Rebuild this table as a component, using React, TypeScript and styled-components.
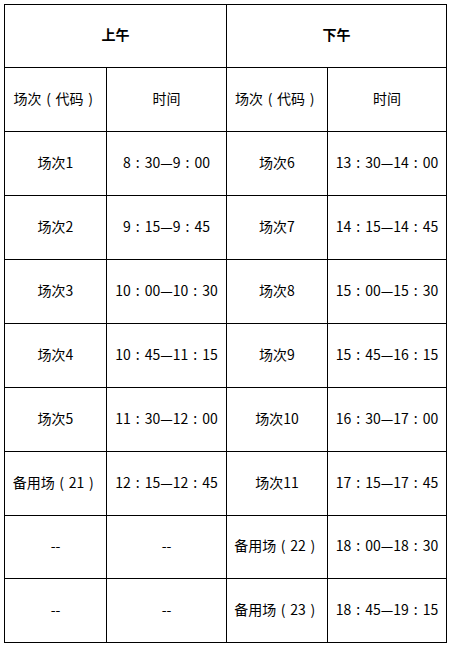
import React from "react";
import styled, { createGlobalStyle } from "styled-components";

const Global = createGlobalStyle`
  html, body { margin: 0; padding: 0; background: #fff; }
  body { font-family: "Noto Sans CJK SC", "Microsoft YaHei", sans-serif; color: #000; }
`;

const Page = styled.div`
  padding: 4px;
`;

const Grid = styled.div`
  display: grid;
  grid-template-columns: 102px 120px 101px 119px;
  grid-template-rows: 63px 64px 64px 64px 64px 64px 64px 64px 63px 64px;
  width: max-content;
  border-top: 1px solid #000;
  border-left: 1px solid #000;
`;

const Cell = styled.div<{ $span?: number; $bold?: boolean }>`
  grid-column: span ${(p) => p.$span ?? 1};
  border-right: 1px solid #000;
  border-bottom: 1px solid #000;
  display: flex;
  align-items: center;
  justify-content: center;
  font-size: 14px;
  font-weight: ${(p) => (p.$bold ? 700 : 400)};
  white-space: nowrap;
  line-height: 1;
  padding-bottom: 4px;
  box-sizing: border-box;
`;

const Punct = styled.span`
  display: inline-block;
  width: 1em;
  text-align: center;
`;

const MAP: Record<string, string> = { "：": ":", "（": "(", "）": ")" };

function Text({ s }: { s: string }) {
  const parts = s.split(/([：（）])/).filter(Boolean);
  return (
    <span>
      {parts.map((p, i) =>
        MAP[p] ? <Punct key={i}>{MAP[p]}</Punct> : <React.Fragment key={i}>{p}</React.Fragment>
      )}
    </span>
  );
}

const rows: [string, string, string, string][] = [
  ["场次（代码）", "时间", "场次（代码）", "时间"],
  ["场次1", "8：30—9：00", "场次6", "13：30—14：00"],
  ["场次2", "9：15—9：45", "场次7", "14：15—14：45"],
  ["场次3", "10：00—10：30", "场次8", "15：00—15：30"],
  ["场次4", "10：45—11：15", "场次9", "15：45—16：15"],
  ["场次5", "11：30—12：00", "场次10", "16：30—17：00"],
  ["备用场（21）", "12：15—12：45", "场次11", "17：15—17：45"],
  ["--", "--", "备用场（22）", "18：00—18：30"],
  ["--", "--", "备用场（23）", "18：45—19：15"],
];

export default function App() {
  return (
    <Page>
      <Global />
      <Grid>
        <Cell $span={2} $bold>上午</Cell>
        <Cell $span={2} $bold>下午</Cell>
        {rows.map((r, i) =>
          r.map((c, j) => (
            <Cell key={`${i}-${j}`}>
              <Text s={c} />
            </Cell>
          ))
        )}
      </Grid>
    </Page>
  );
}
